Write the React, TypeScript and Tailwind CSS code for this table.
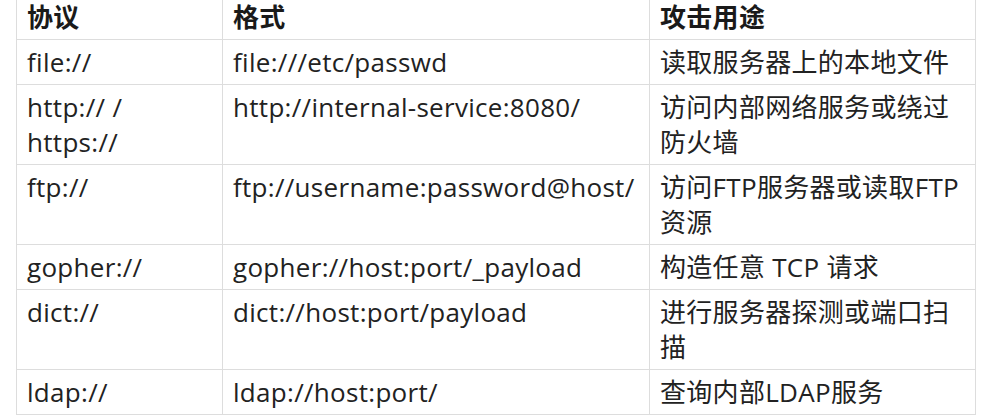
import React from "react";

const rows: [string, string, string][] = [
  ["file://", "file:///etc/passwd", "读取服务器上的本地文件"],
  ["http:// / https://", "http://internal-service:8080/", "访问内部网络服务或绕过防火墙"],
  ["ftp://", "ftp://username:password@host/", "访问FTP服务器或读取FTP资源"],
  ["gopher://", "gopher://host:port/_payload", "构造任意 TCP 请求"],
  ["dict://", "dict://host:port/payload", "进行服务器探测或端口扫描"],
  ["ldap://", "ldap://host:port/", "查询内部LDAP服务"],
];

export default function App() {
  return (
    <div
      className="w-[984px] h-[419px] bg-white overflow-hidden pl-[16px]"
      style={{ fontFamily: '"Open Sans", "Noto Sans CJK SC", sans-serif' }}
    >
      <table className="border-collapse table-fixed w-[959px] text-[26px] leading-[35px] tracking-[0.3px] text-[#222222]">
        <colgroup>
          <col className="w-[206px]" />
          <col className="w-[427px]" />
          <col className="w-[326px]" />
        </colgroup>
        <thead>
          <tr>
            {["协议", "格式", "攻击用途"].map((h) => (
              <th
                key={h}
                className="border-x border-b border-[#dddddd] text-left font-bold text-[#1a1a1a] px-[10px] pt-0 pb-[4px] align-top"
              >
                {h}
              </th>
            ))}
          </tr>
        </thead>
        <tbody>
          {rows.map((r) => (
            <tr key={r[0]}>
              {r.map((c, i) => (
                <td
                  key={i}
                  className="border border-[#dddddd] px-[10px] pt-[5px] pb-[4px] align-top"
                >
                  {c}
                </td>
              ))}
            </tr>
          ))}
        </tbody>
      </table>
    </div>
  );
}
